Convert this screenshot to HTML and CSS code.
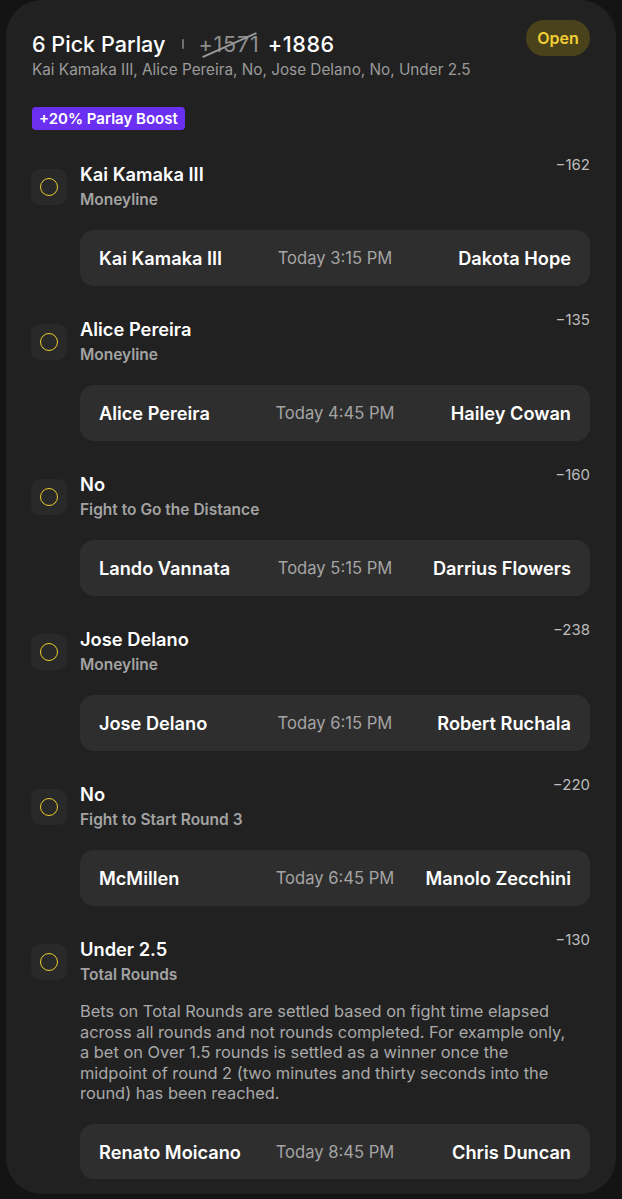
FILE: index.html
```html
<!DOCTYPE html>
<html lang="en">

<head>
  <meta charset="UTF-8">
  <meta name="viewport" content="width=device-width, initial-scale=1.0">
  <title>6 Pick Parlay</title>
  <link rel="stylesheet" href="styles.css">
</head>

<body>
  <div class="card">

    <div class="header">
      <div class="header-text">
        <div class="title-row">
          <span class="title">6 Pick Parlay</span>
          <span class="divider"></span>
          <span class="old-odds">+1571</span>
          <span class="new-odds">+1886</span>
        </div>
        <div class="summary">Kai Kamaka III, Alice Pereira, No, Jose Delano, No, Under 2.5</div>
      </div>
      <span class="status">Open</span>
    </div>

    <span class="boost">+20% Parlay Boost</span>

    <div class="legs">

      <div class="leg">
        <div class="pick-icon"><span class="ring"></span></div>
        <div class="leg-body">
          <div class="leg-head">
            <div class="pick-info">
              <div class="pick-name">Kai Kamaka III</div>
              <div class="pick-market">Moneyline</div>
            </div>
            <div class="odds">−162</div>
          </div>
          <div class="matchup">
            <span class="fighter">Kai Kamaka III</span>
            <span class="time">Today 3:15 PM</span>
            <span class="fighter right">Dakota Hope</span>
          </div>
        </div>
      </div>

      <div class="leg">
        <div class="pick-icon"><span class="ring"></span></div>
        <div class="leg-body">
          <div class="leg-head">
            <div class="pick-info">
              <div class="pick-name">Alice Pereira</div>
              <div class="pick-market">Moneyline</div>
            </div>
            <div class="odds">−135</div>
          </div>
          <div class="matchup">
            <span class="fighter">Alice Pereira</span>
            <span class="time">Today 4:45 PM</span>
            <span class="fighter right">Hailey Cowan</span>
          </div>
        </div>
      </div>

      <div class="leg">
        <div class="pick-icon"><span class="ring"></span></div>
        <div class="leg-body">
          <div class="leg-head">
            <div class="pick-info">
              <div class="pick-name">No</div>
              <div class="pick-market">Fight to Go the Distance</div>
            </div>
            <div class="odds">−160</div>
          </div>
          <div class="matchup">
            <span class="fighter">Lando Vannata</span>
            <span class="time">Today 5:15 PM</span>
            <span class="fighter right">Darrius Flowers</span>
          </div>
        </div>
      </div>

      <div class="leg">
        <div class="pick-icon"><span class="ring"></span></div>
        <div class="leg-body">
          <div class="leg-head">
            <div class="pick-info">
              <div class="pick-name">Jose Delano</div>
              <div class="pick-market">Moneyline</div>
            </div>
            <div class="odds">−238</div>
          </div>
          <div class="matchup">
            <span class="fighter">Jose Delano</span>
            <span class="time">Today 6:15 PM</span>
            <span class="fighter right">Robert Ruchala</span>
          </div>
        </div>
      </div>

      <div class="leg">
        <div class="pick-icon"><span class="ring"></span></div>
        <div class="leg-body">
          <div class="leg-head">
            <div class="pick-info">
              <div class="pick-name">No</div>
              <div class="pick-market">Fight to Start Round 3</div>
            </div>
            <div class="odds">−220</div>
          </div>
          <div class="matchup">
            <span class="fighter">McMillen</span>
            <span class="time">Today 6:45 PM</span>
            <span class="fighter right">Manolo Zecchini</span>
          </div>
        </div>
      </div>

      <div class="leg">
        <div class="pick-icon"><span class="ring"></span></div>
        <div class="leg-body">
          <div class="leg-head">
            <div class="pick-info">
              <div class="pick-name">Under 2.5</div>
              <div class="pick-market">Total Rounds</div>
            </div>
            <div class="odds">−130</div>
          </div>
          <p class="rules">Bets on Total Rounds are settled based on fight time elapsed<br>
            across all rounds and not rounds completed. For example only,<br>
            a bet on Over 1.5 rounds is settled as a winner once the<br>
            midpoint of round 2 (two minutes and thirty seconds into the<br>
            round) has been reached.</p>
          <div class="matchup">
            <span class="fighter">Renato Moicano</span>
            <span class="time">Today 8:45 PM</span>
            <span class="fighter right">Chris Duncan</span>
          </div>
        </div>
      </div>

    </div>
  </div>
</body>

</html>
```

FILE: styles.css
```css
body {
  font-family: 'Inter', 'Noto Sans', sans-serif;
  background-color: #141414;
  color: #ffffff;
  margin: 0;
  padding: 0;
}

.card {
  margin: 0 6px;
  padding: 20px 26px 15px;
  background-color: #212121;
  border-radius: 36px;
}

/* Header */
.header {
  display: flex;
  justify-content: space-between;
  align-items: flex-start;
}

.header-text {
  padding-top: 10px;
}

.title-row {
  display: flex;
  align-items: center;
  height: 28px;
  font-size: 21.6px;
  font-weight: 500;
}

.divider {
  width: 2px;
  height: 10px;
  margin: 0 14px 0 17px;
  background-color: #6e6e6e;
  border-radius: 1px;
}

.old-odds {
  position: relative;
  color: #8d8d8d;
  font-weight: 400;
  letter-spacing: 0.8px;
  margin-right: 8px;
}

.old-odds::after {
  content: '';
  position: absolute;
  left: 2px;
  right: 0;
  top: 50%;
  height: 2px;
  background-color: #9a9a9a;
  transform: rotate(-24deg);
}

.new-odds {
  letter-spacing: 0.6px;
}

.summary {
  margin-top: 2px;
  font-size: 15.3px;
  line-height: 20px;
  color: #9a9a9a;
}

.status {
  width: 64px;
  height: 36px;
  line-height: 36px;
  text-align: center;
  border-radius: 18px;
  background-color: #4a421b;
  color: #f1cf34;
  font-size: 16px;
  font-weight: 600;
}

.boost {
  display: inline-block;
  margin-top: 27px;
  padding: 0 7px;
  height: 23px;
  line-height: 23px;
  border-radius: 4px;
  background-color: #6a2ff0;
  font-size: 15px;
  font-weight: 600;
}

/* Legs */
.legs {
  margin-top: 32px;
}

.leg {
  display: flex;
  gap: 13px;
  margin-bottom: 31.5px;
}

.leg:last-child {
  margin-bottom: 0;
}

.pick-icon {
  flex-shrink: 0;
  width: 36px;
  height: 36px;
  margin-top: 7px;
  margin-left: -1px;
  border-radius: 9px;
  background-color: #292929;
  display: flex;
  justify-content: center;
  align-items: center;
}

.ring {
  width: 16.6px;
  height: 16.6px;
  border: 1.7px solid #e9cb2c;
  border-radius: 50%;
}

.leg-body {
  flex: 1;
}

.leg-head {
  display: flex;
  justify-content: space-between;
  align-items: flex-start;
}

.pick-name {
  font-size: 18.3px;
  font-weight: 600;
  line-height: 24px;
}

.pick-market {
  margin-top: 4px;
  font-size: 15.5px;
  font-weight: 600;
  line-height: 20px;
  color: #a3a3a3;
}

.odds {
  margin-top: -7px;
  font-size: 15px;
  line-height: 20px;
  color: #bdbdbd;
}

.rules {
  margin: 16px 0 4px;
  font-size: 16.4px;
  line-height: 20.6px;
  color: #a9a9a9;
  white-space: nowrap;
}

.matchup {
  display: grid;
  grid-template-columns: 1fr auto 1fr;
  align-items: center;
  height: 55.5px;
  margin-top: 20px;
  padding: 0 19px;
  border-radius: 14px;
  background-color: #2e2e2e;
}

.fighter {
  font-size: 18.2px;
  font-weight: 600;
}

.fighter.right {
  text-align: right;
}

.time {
  font-size: 16.6px;
  color: #a4a4a4;
}
```
